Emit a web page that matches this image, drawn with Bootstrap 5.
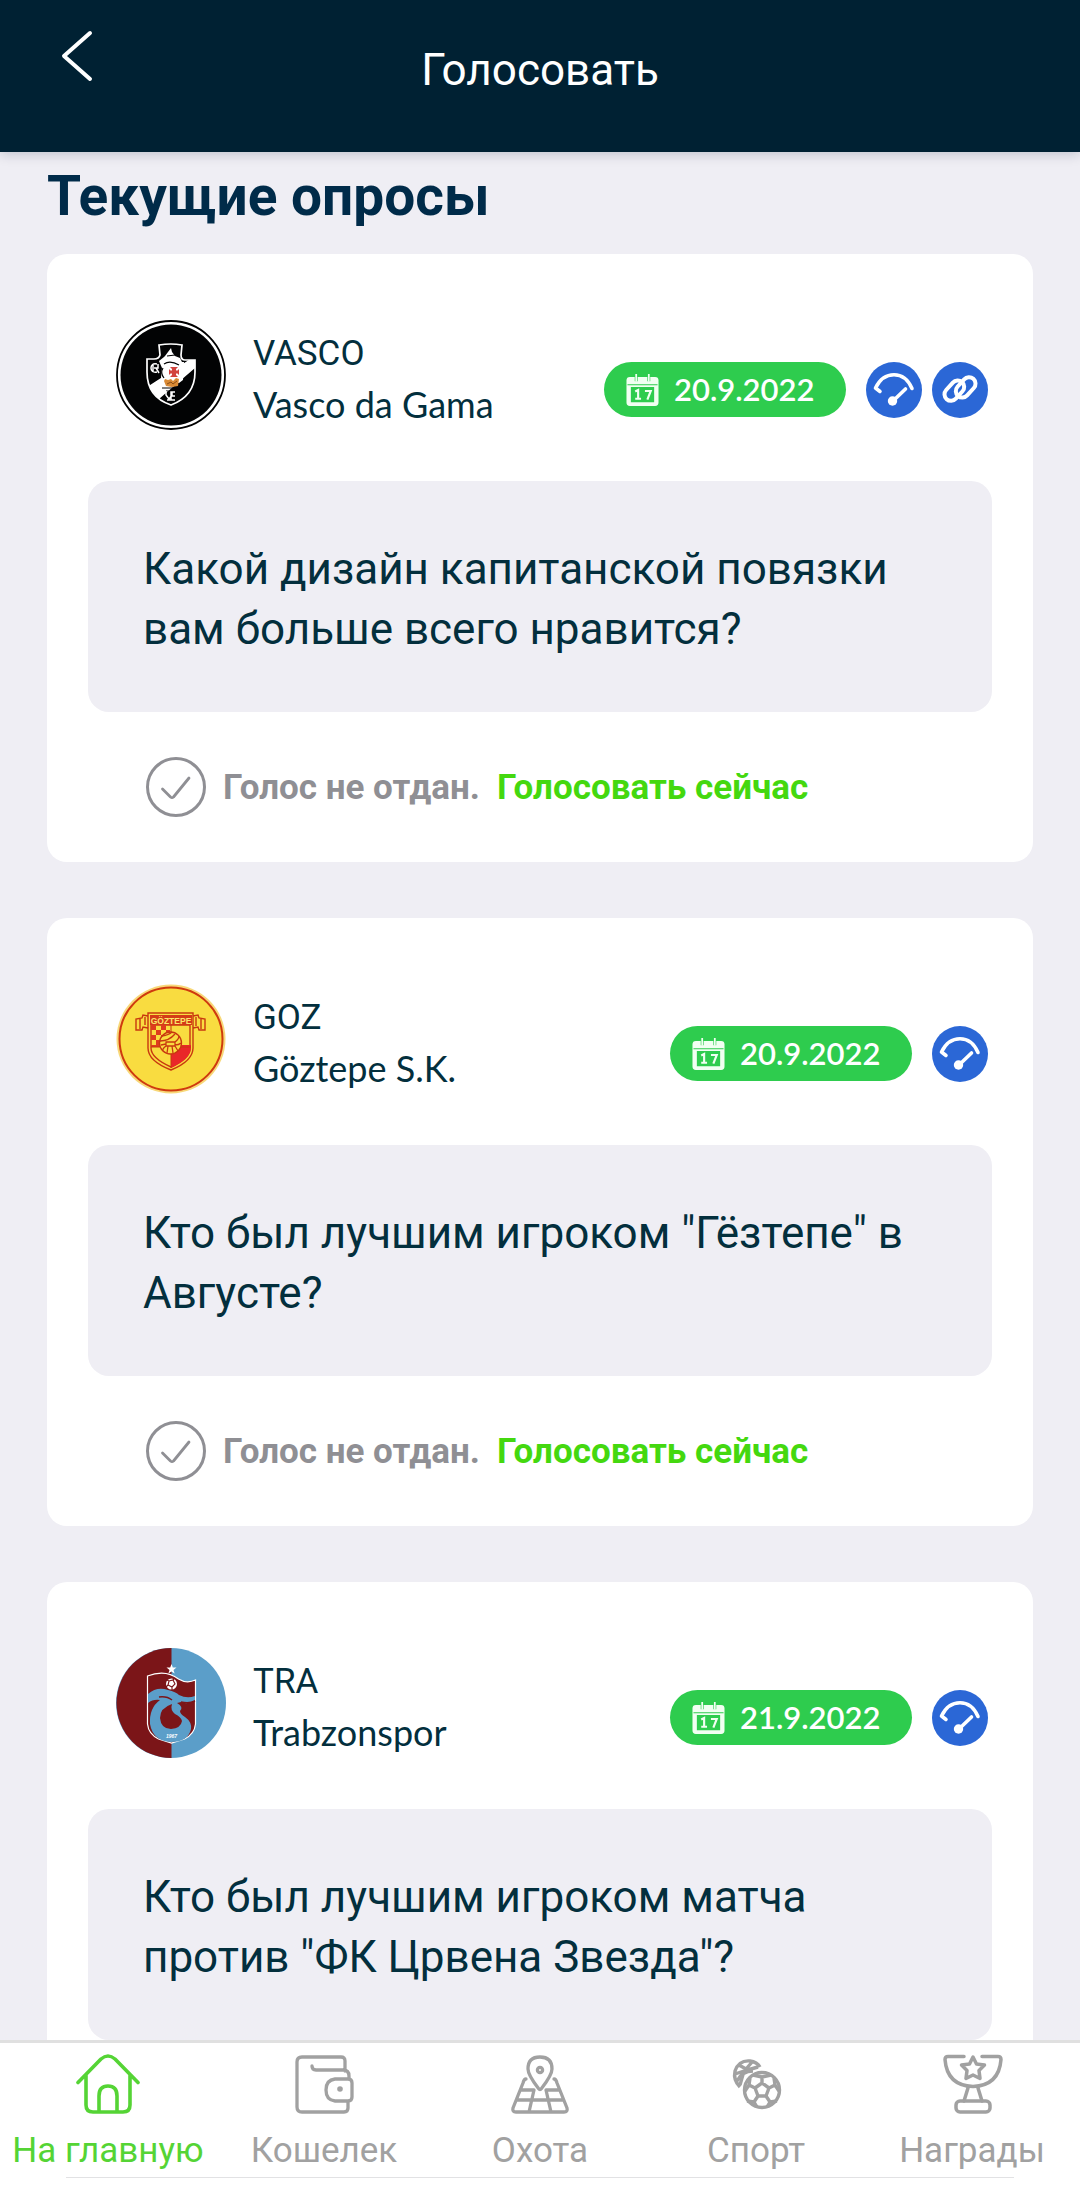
<!DOCTYPE html>
<html lang="ru">
<head>
<meta charset="utf-8">
<meta name="viewport" content="width=device-width, initial-scale=1">
<title>Голосовать</title>
<link href="https://cdn.jsdelivr.net/npm/bootstrap@5.3.0/dist/css/bootstrap.min.css" rel="stylesheet">
<style>
  body { font-family: Roboto, "Liberation Sans", sans-serif; background: #efeef4; color: #032f3d; }
  .top-bar { height: 152px; background: #002133; box-shadow: 0 2px 12px rgba(0, 20, 50, .2); z-index: 2; padding: 0 48px; }
  .top-bar h1 { font-size: 44px; line-height: 60px; padding-top: 40px; }
  .back-btn { width: 56px; height: 80px; margin-top: 16px; }
  .feed { padding: 12px 47px 56px; scrollbar-width: none; }
  .feed::-webkit-scrollbar { display: none; }
  .feed h2 { font-size: 55px; line-height: 64px; font-weight: 700; color: #002b49; margin-bottom: 26px; }
  .poll { border-radius: 20px; margin-bottom: 56px; padding: 66px 41px 45px; }
  .poll-head { padding: 0 4px 0 28px; margin-bottom: 51px; gap: 27px; }
  .crest { width: 110px; height: 110px; }
  .names { padding-top: 8px; line-height: 51px; }
  .ticker { font-size: 35px; }
  .club { font-family: Lato, "Open Sans", sans-serif; font-size: 36px; }
  .tags { gap: 10px; margin-top: 42px; }
  .date-pill { width: 242px; height: 55px; margin-right: 10px; padding-left: 22px; gap: 15px; background: #2ecc4e; font-family: Lato, "Open Sans", sans-serif; font-size: 31px; font-weight: 600; }
  .question { background: #efeef4; border-radius: 21px; padding: 58px 55px 53px; font-size: 44px; line-height: 60px; }
  .vote-line { padding-left: 58px; margin-top: 45px; gap: 17px; font-size: 35px; line-height: 62px; height: 60px; font-weight: 700; color: #8f8f94; }
  .vote-line a { color: #44d80f; }
  .tab-bar { border-top: 3px solid #e0e0e0; z-index: 2; padding-bottom: 8px; }
  .tab-bar .nav-link { color: #a1a1a1; font-size: 35px; line-height: 48px; padding: 8px 0 0; }
  .tab-bar .nav-link.active { color: #55d435; }
  .tab-bar svg { width: 72px; height: 64px; margin-bottom: 12px; }
  .home-line { height: 1px; background: #e2e2e4; margin: 2px 66px 0; }
</style>
</head>
<body class="vh-100 d-flex flex-column overflow-hidden">

<svg class="d-none" aria-hidden="true">
  <symbol id="calendar" viewBox="0 0 34 34">
    <path fill="#f1fff2" fill-rule="evenodd" d="M4 3.500h5v4.500h3v-4.500h10v4.500h3v-4.500h5q3.500 0 3.500 3.500v23q0 3.500-3.500 3.500H4Q.5 33.500.5 30V7Q.5 3.500 4 3.500zM5 14v15.500h24V14zM1.500 11v1.200h31V11z"/>
    <path stroke="#f1fff2" stroke-width="1.800" d="M10.500.5v8M23.500.5v8"/>
    <path fill="none" stroke="#f1fff2" stroke-width="2.200" d="M9.500 18.500l3-1.500v9.500M9.500 26h6M19.500 18h6l-3.500 9"/>
  </symbol>
  <symbol id="gauge" viewBox="0 0 56 56">
    <circle cx="28" cy="28" r="28" fill="#2b67d6"/>
    <path fill="none" stroke="#fff" stroke-width="3.600" stroke-linecap="round" stroke-linejoin="round" d="M14 29.500 9.500 26Q16 12.800 28 12.800T46 26.500M39.500 27 27 39"/>
    <circle cx="26.500" cy="39" r="4.700" fill="#fff"/>
  </symbol>
  <symbol id="chain" viewBox="0 0 56 56">
    <circle cx="28" cy="28" r="28" fill="#2b67d6"/>
    <g fill="none" stroke="#fff" stroke-width="4">
      <rect x="11" y="22.500" width="23" height="13" rx="6.500" transform="rotate(-48 22 29)"/>
      <rect x="22" y="18.500" width="23" height="13" rx="6.500" transform="rotate(-48 34 25)"/>
    </g>
  </symbol>
  <symbol id="check" viewBox="0 0 60 60">
    <g fill="none" stroke="#8f8f94" stroke-width="3" stroke-linecap="round" stroke-linejoin="round">
      <circle cx="30" cy="30" r="28.500"/><path stroke-width="2.800" d="m16.500 32 8 8q1.500 1.200 3 0L43 21"/>
    </g>
  </symbol>
</svg>

<header class="top-bar flex-shrink-0 position-relative d-flex text-white">
  <button type="button" class="btn p-0 border-0 back-btn position-absolute" aria-label="Назад">
    <svg width="56" height="80" viewBox="0 0 56 80" fill="none" stroke="#fff" stroke-width="4" stroke-linecap="round" stroke-linejoin="round"><path d="M42 17 16 40l26 23"/></svg>
  </button>
  <h1 class="flex-fill text-center fw-normal m-0">Голосовать</h1>
</header>

<main class="feed flex-grow-1 overflow-auto">
  <h2>Текущие опросы</h2>

  <article class="poll bg-white">
    <div class="poll-head d-flex">
      <svg class="crest flex-shrink-0" viewBox="0 0 110 110" role="img" aria-label="Vasco da Gama">
        <circle cx="55" cy="55" r="54" fill="#fff" stroke="#000" stroke-width="1.800"/>
        <circle cx="55" cy="55" r="50.500" fill="#020304"/>
        <clipPath id="vs"><path d="M43 25q12-2 23 0l-1 10q0 5 4 5h10v12q0 24-24 33Q31 77 31 52V39h7q5 0 6-4z"/></clipPath>
        <g clip-path="url(#vs)"><path fill="#fff" d="M79 36v12L43 79l-8-9-4-3z"/></g>
        <path fill="none" stroke="#fff" stroke-width="1.700" d="M43 25q12-2 23 0l-1 10q0 5 4 5h10v12q0 24-24 33Q31 77 31 52V39h7q5 0 6-4z"/>
        <path fill="#fff" d="M49 36l6-8 1 4 3 4 5 2 2 4h2l-1 18-4 3-17-1-1-5 1-9-3-7 5-4z"/>
        <path fill="none" stroke="#020304" stroke-width="1.200" d="M48 44q6-4 15 1M47 48q-3 5 1 10M51 36l8-1M67 61l-4 7M46 68h19M50 71h10"/>
        <path fill="#d2433e" d="M54 47h8l-2 2v1.500h1.500l1.500-1.500v6l-1.500-1.500H60V55l2 2h-8l2-2v-1.500h-1.500L53 55v-6l1.500 1.500H56V49z"/>
        <path fill="#d98a35" d="M49 59l3 1 3-1 2 2 3-3 3 1-1 7-6 1-6-1-2-5z"/>
        <path fill="none" stroke="#8a4d17" stroke-width="1" d="m51 64 4-2 2 2 4-3"/>
        <path fill="none" stroke="#fff" stroke-width="1.500" d="M41 44q-6-1-6 4t6 4M37 44v8M38 48h4v-4M40 48l3 5M50 71v4l3 4 3-4v-3M59 72h-4v8h4M51 80h8M55 76h4"/>
      </svg>
      <div class="names flex-grow-1"><div class="ticker">VASCO</div><div class="club">Vasco da Gama</div></div>
      <div class="tags d-flex">
        <div class="date-pill rounded-pill d-flex align-items-center text-white"><svg width="33" height="34"><use href="#calendar"/></svg><time datetime="2022-09-20">20.9.2022</time></div>
        <svg width="56" height="56"><use href="#gauge"/></svg>
        <svg width="56" height="56"><use href="#chain"/></svg>
      </div>
    </div>
    <div class="question">Какой дизайн капитанской повязки вам больше всего нравится?</div>
    <div class="vote-line d-flex"><svg width="60" height="60"><use href="#check"/></svg><span>Голос не отдан.</span><a href="#" class="text-decoration-none">Голосовать сейчас</a></div>
  </article>

  <article class="poll bg-white">
    <div class="poll-head d-flex">
      <svg class="crest flex-shrink-0" viewBox="0 0 110 110" role="img" aria-label="Göztepe S.K.">
        <circle cx="55" cy="55" r="54.500" fill="#f8d878"/>
        <circle cx="55" cy="55" r="51.500" fill="#f9dc40" stroke="#cf3a0e" stroke-width="2"/>
        <g fill="none" stroke="#c8380f" stroke-width="1.400">
          <path fill="#f9dc40" d="M32 29h45v35q0 13-22 22Q32 77 32 64z"/>
          <path d="M35 41h39v23q0 10-19 19Q35 74 35 64zM32 32l-5-1-1 3-6 1v11h6l1-3 5 1M77 32l5-1 1 3 6 1v11h-6l-1-3-5 1M24 35v10M29 33v8M80 33v9M85 35v10"/>
        </g>
        <path fill="#d43b17" d="M34 31h42v10H34z"/>
        <text x="55" y="39.500" text-anchor="middle" font-family="Liberation Sans" font-size="8.500" font-weight="700" fill="#fbe66a">GÖZTEPE</text>
        <path fill="#de3d1d" d="M35 41h5v5h-5zM45 41h5v5h-5zM40 46h5v5h-5zM50 46h4v5h-4zM35 51h5v5h-5zM45 51h5v5h-5zM40 56h5v5h-5zM35 61h10v2H35z"/>
        <path fill="#e92729" d="M55 61h20v3q0 11-20 20z"/>
        <path stroke="#c8380f" d="M55 41v43M35 63h40"/>
        <circle cx="54.500" cy="59" r="11" fill="#f9dc40" stroke="#c8380f" stroke-width="1.300"/>
        <path fill="none" stroke="#c8380f" stroke-width="1.300" d="M50 58h9v4h-9zM46 52q7-1 10-4M44 57q9 0 15-7M59 58q4-3 4-6M59 61q4 0 6-2M50 62q-4 3-3 5M52 62l-1 7M56 62l1 7M59 62l3 5M45 61l5-1"/>
      </svg>
      <div class="names flex-grow-1"><div class="ticker">GOZ</div><div class="club">Göztepe S.K.</div></div>
      <div class="tags d-flex">
        <div class="date-pill rounded-pill d-flex align-items-center text-white"><svg width="33" height="34"><use href="#calendar"/></svg><time datetime="2022-09-20">20.9.2022</time></div>
        <svg width="56" height="56"><use href="#gauge"/></svg>
      </div>
    </div>
    <div class="question">Кто был лучшим игроком "Гёзтепе" в Августе?</div>
    <div class="vote-line d-flex"><svg width="60" height="60"><use href="#check"/></svg><span>Голос не отдан.</span><a href="#" class="text-decoration-none">Голосовать сейчас</a></div>
  </article>

  <article class="poll bg-white">
    <div class="poll-head d-flex">
      <svg class="crest flex-shrink-0" viewBox="0 0 110 110" role="img" aria-label="Trabzonspor">
        <circle cx="55" cy="55" r="55" fill="#5b9ec9"/>
        <path fill="#7b1518" d="M55.500 0a55 55 0 1 0 0 110z"/>
        <path fill="#7b1518" stroke="#fff" stroke-width="1.200" d="M31.500 28q18-7 31 3 8 5 17 1v44q-1 10-11 15l-13 4-13-4q-10-5-11-15z"/>
        <path fill="#fff" d="m55.500 16 1.300 3.500 3.700.1-3 2.300 1.100 3.600-3.100-2.100-3.100 2.100 1.100-3.600-3-2.300 3.700-.1z"/>
        <circle cx="55.500" cy="36" r="5.500" fill="#fff"/>
        <path fill="none" stroke="#7b1518" stroke-width="1.100" d="M53 33l4-1 2 4-3 3-4-2zM53 33l-2-1M57 32l1-1M52 37l-2 2M56 39v3"/>
        <path fill="#5b9ec9" d="M32 46q9-8 20-4 8 2 11 5 8 4 16 1v4q-7 5-14 2l-4 1q7 4 3 8 0 3 5 6 7 5 6 12-3 13-20 13Q37 93 34 76q-1-16 10-24-7-1-12 3z"/>
        <path fill="#7b1518" d="M56 56q-12 4-12 14 1 11 11 11 10-1 11-8-1-4-7-7-5-4-3-10z"/>
        <path fill="none" stroke="#7b1518" stroke-width="1.500" d="M43 49q8-1 13 3M65 54q8 2 14-1"/>
        <text x="55.500" y="89.500" text-anchor="middle" font-family="Liberation Sans" font-size="5" font-weight="700" font-style="italic" fill="#fff">1967</text>
      </svg>
      <div class="names flex-grow-1"><div class="ticker">TRA</div><div class="club">Trabzonspor</div></div>
      <div class="tags d-flex">
        <div class="date-pill rounded-pill d-flex align-items-center text-white"><svg width="33" height="34"><use href="#calendar"/></svg><time datetime="2022-09-21">21.9.2022</time></div>
        <svg width="56" height="56"><use href="#gauge"/></svg>
      </div>
    </div>
    <div class="question">Кто был лучшим игроком матча против "ФК Црвена Звезда"?</div>
  </article>
</main>

<nav class="tab-bar bg-white flex-shrink-0 position-relative">
  <div class="nav nav-justified flex-nowrap text-nowrap">
    <a class="nav-link active d-flex flex-column align-items-center" href="#">
      <svg viewBox="0 0 72 64" fill="none" stroke="currentColor" stroke-width="3.600" stroke-linecap="round" stroke-linejoin="round"><path d="M6 31.500 29 8q7-6 14 0l23 23.500M14 24v30q0 7 7 7h30q7 0 7-7V24M27 61V45q0-10 9-10t9 10v16"/></svg>
      <span>На главную</span></a>
    <a class="nav-link d-flex flex-column align-items-center" href="#">
      <svg viewBox="0 0 72 64" fill="none" stroke="currentColor" stroke-width="3.300" stroke-linecap="round" stroke-linejoin="round"><path d="M57 20V10q0-4-4-4H14q-5 0-5 5v45q0 5 5 5h42q4 0 4-4v-6M24 15q0 4 4 4h27q6 0 6 6v3M47 28h13q4 0 4 4v14q0 4-4 4H47q-9-1-9-11t9-11z"/><circle cx="52" cy="38" r="2.800" fill="currentColor" stroke="none"/></svg>
      <span>Кошелек</span></a>
    <a class="nav-link d-flex flex-column align-items-center" href="#">
      <svg viewBox="0 0 72 64" fill="none" stroke="currentColor" stroke-width="3.300" stroke-linecap="round" stroke-linejoin="round"><path d="M37.500 37.500q-1.500 2-3 0Q24 24 24 18q0-12 12-12t12 12q0 6-10.500 19.500zM22 28q-2 0-3 4L9 57q-1 4 3 4h48q4 0 3-4L53 32q-1-4-3-4M18 39h12l-5 22M55 39H42l5 22M13 49h46"/><circle cx="36" cy="19" r="2.600"/></svg>
      <span>Охота</span></a>
    <a class="nav-link d-flex flex-column align-items-center" href="#">
      <svg viewBox="0 0 72 64" fill="none" stroke="currentColor" stroke-width="3.400" stroke-linejoin="round"><path d="M20 36Q13 29 15 20 19 9 30 10q7 1 10 6M15 23l9-3-4 14M19 14l7 4 7-8M24 20l14-4M17 30q5-10 16-10"/><circle cx="42" cy="39" r="17.500"/><path d="m42 32 7 5-3 8h-8l-3-8zM42 32v-6M49 37l6-3M46 45l4 6M38 45l-4 6M35 37l-6-3M33 24l9 2 9-2M54 27l1 7 4 6M57 50l-7 1-3 5M37 56l-3-5-7-1M25 40l4-6 1-7"/></svg>
      <span>Спорт</span></a>
    <a class="nav-link d-flex flex-column align-items-center" href="#">
      <svg viewBox="0 0 72 64" fill="none" stroke="currentColor" stroke-width="3.500" stroke-linecap="round" stroke-linejoin="round"><path d="M28 5.500H12q-3 0-3 3 2 26 28 27 26-1 28-27 0-3-3-3H46M32 37l-4 13M42 37l4 13"/><rect x="20" y="50" width="34" height="11" rx="4"/><path d="m37 6 3.500 7 8 1-5.500 5.500 1 8-7-3.500-7 3.500 1-8-5.500-5.500 8-1z"/></svg>
      <span>Награды</span></a>
  </div>
  <div class="home-line"></div>
</nav>

<script src="https://cdn.jsdelivr.net/npm/bootstrap@5.3.0/dist/js/bootstrap.bundle.min.js"></script>
</body>
</html>
